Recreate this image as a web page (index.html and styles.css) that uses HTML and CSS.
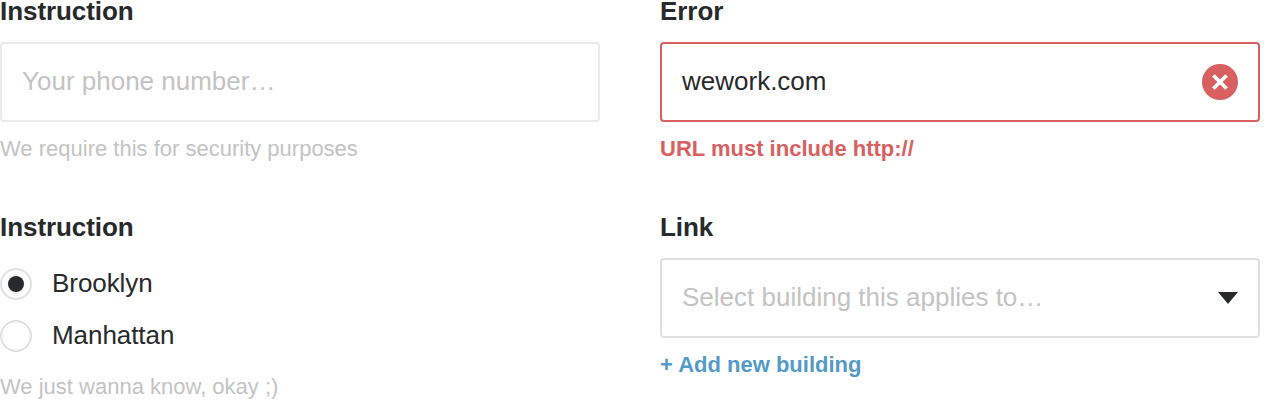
FILE: index.html
```html
<!DOCTYPE html>
<html lang="en">
<head>
<meta charset="utf-8">
<title>Form fields</title>
<link rel="stylesheet" href="styles.css">
</head>
<body>
<form class="form">
  <section class="field">
    <h2 class="label">Instruction</h2>
    <div class="control"><span class="placeholder">Your phone number…</span></div>
    <p class="help">We require this for security purposes</p>
  </section>
  <section class="field">
    <h2 class="label">Error</h2>
    <div class="control control-error">
      <span class="value">wework.com</span>
      <svg class="error-icon" viewBox="0 0 36 36" width="36" height="36" aria-hidden="true">
        <circle cx="18" cy="18" r="18" fill="#d86060"/>
        <path d="M11.4 11.4 24.6 24.6M24.6 11.4 11.4 24.6" stroke="#fff" stroke-width="3.6" stroke-linecap="butt" fill="none"/>
      </svg>
    </div>
    <p class="help help-error">URL must include http://</p>
  </section>
  <section class="field">
    <h2 class="label">Instruction</h2>
    <div class="options">
      <div class="option"><span class="radio radio-checked"></span><span class="option-text">Brooklyn</span></div>
      <div class="option"><span class="radio"></span><span class="option-text">Manhattan</span></div>
    </div>
    <p class="help help-options">We just wanna know, okay ;)</p>
  </section>
  <section class="field">
    <h2 class="label">Link</h2>
    <div class="control control-select">
      <span class="placeholder">Select building this applies to…</span>
      <svg class="arrow" viewBox="0 0 20 12" width="20" height="12" aria-hidden="true"><path d="M0 0H20L10 12Z" fill="#27292b"/></svg>
    </div>
    <p class="help help-link">+ Add new building</p>
  </section>
</form>
</body>
</html>
```
FILE: styles.css
```css
* { box-sizing: border-box; }
body {
  margin: 0;
  height: 400px;
  overflow: hidden;
  background: #fff;
  color: #27292b;
  font-family: "Liberation Sans", Arial, sans-serif;
  font-size: 26px;
}
.form {
  display: grid;
  grid-template-columns: 600px 600px;
  grid-template-rows: 216px 184px;
  column-gap: 60px;
}
.label {
  margin: 0 0 20px;
  font-size: 26px;
  line-height: 22px;
  font-weight: 700;
  letter-spacing: -0.06px;
}
.control {
  display: flex;
  align-items: center;
  justify-content: space-between;
  height: 80px;
  padding: 0 20px;
  border: 2px solid #ebebeb;
  border-radius: 4px;
}
.control-error { border-color: #d86060; }
.control-select { border-color: #e0e0e0; }
.placeholder, .value { line-height: 30px; padding-bottom: 2px; }
.placeholder { color: #c3c3c3; }
.help {
  margin: 14px 0 0;
  font-size: 22px;
  line-height: 25px;
  color: #c3c3c3;
}
.help-error { color: #d86060; font-weight: 700; }
.help-link { color: #539ac6; font-weight: 700; }
.help-options { margin-top: 22px; }
.options {
  display: flex;
  flex-direction: column;
  gap: 20px;
  padding-top: 10px;
}
.option {
  display: flex;
  align-items: center;
  gap: 20px;
  height: 32px;
}
.option-text {
  line-height: 30px;
  padding-bottom: 2px;
  letter-spacing: -0.06px;
}
.radio {
  display: grid;
  place-items: center;
  width: 32px;
  height: 32px;
  border: 2px solid #e0e0e0;
  border-radius: 50%;
}
.radio-checked::after {
  content: "";
  width: 16px;
  height: 16px;
  border-radius: 50%;
  background: #27292b;
}
.arrow { display: block; }
```
